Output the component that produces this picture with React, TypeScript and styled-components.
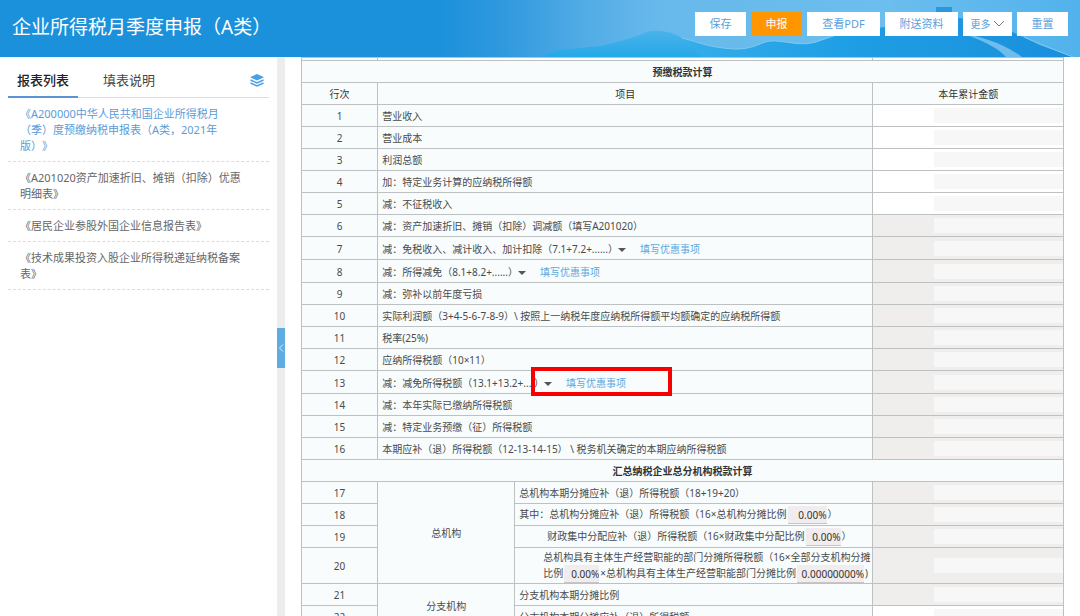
import React from "react";
import styled, { createGlobalStyle } from "styled-components";

const Global = createGlobalStyle`
  *, *::before, *::after { box-sizing: border-box; }
  body {
    margin: 0;
    background: #fff;
    color: #4a4a4a;
    font-family: "Noto Sans", "Noto Sans CJK SC", sans-serif;
    font-size: 10px;
    text-spacing-trim: space-all;
  }
  button, input { font-family: inherit; }
`;

const Page = styled.div`
  display: flex;
  flex-direction: column;
  height: 100vh;
  overflow: hidden;
`;

const Header = styled.header`
  position: relative;
  flex: none;
  display: flex;
  align-items: center;
  justify-content: space-between;
  height: 57px;
  padding: 0 12px;
  background: #1c91db;
`;

const Scenery = styled.svg`
  position: absolute;
  top: 0;
  right: 0;
  width: 640px;
  height: 57px;
`;

const Title = styled.h1`
  position: relative;
  margin: 0;
  padding-bottom: 4px;
  color: #fff;
  font-size: 19px;
  font-weight: 400;
  line-height: 28px;
  white-space: nowrap;
`;

const Toolbar = styled.div`
  position: relative;
  display: flex;
  gap: 5px;
  padding-bottom: 10px;
`;

const buttonWidths = { normal: 51, wide: 73, menu: 49 };

const ToolButton = styled.button<{ $primary?: boolean; $kind?: keyof typeof buttonWidths }>`
  display: flex;
  align-items: center;
  justify-content: center;
  gap: 2px;
  height: 24px;
  min-width: ${(p) => buttonWidths[p.$kind ?? "normal"]}px;
  padding: 0 6px;
  border: 0;
  background: ${(p) => (p.$primary ? "#ff9600" : "#fff")};
  color: ${(p) => (p.$primary ? "#fff" : "#5a9fdc")};
  font-size: ${(p) => (p.$kind === "menu" ? 10 : 11)}px;
  line-height: 24px;
  white-space: nowrap;
`;

const Body = styled.div`
  flex: 1;
  display: flex;
  min-height: 0;
`;

const Sidebar = styled.aside`
  flex: none;
  width: 277px;
  padding: 8px 8px 0;
`;

const TabBar = styled.div`
  display: flex;
  align-items: center;
  height: 33px;
  border-bottom: 1px solid #dcdcdc;
`;

const Tab = styled.button<{ $active?: boolean }>`
  height: 33px;
  margin-right: 16px;
  padding: 0 9px;
  border: 0;
  border-bottom: 2px solid ${(p) => (p.$active ? "#5b93d6" : "transparent")};
  background: none;
  color: ${(p) => (p.$active ? "#222" : "#444")};
  font-size: 13px;
  font-weight: ${(p) => (p.$active ? 500 : 400)};
  line-height: 30px;
`;

const LayersButton = styled.button`
  display: flex;
  margin-left: auto;
  padding: 0 5px 2px 0;
  border: 0;
  background: none;
`;

const FormList = styled.ul`
  margin: 0;
  padding: 0;
  list-style: none;
`;

const FormItem = styled.li`
  padding: 8px 24px 7px 12px;
  border-bottom: 1px dashed #dcdcdc;
`;

const FormLink = styled.a<{ $active?: boolean }>`
  display: block;
  color: ${(p) => (p.$active ? "#5b9bd8" : "#666")};
  font-size: 11px;
  line-height: 16px;
  text-decoration: none;
`;

const Divider = styled.div`
  flex: none;
  display: flex;
  align-items: center;
  width: 8px;
  padding-top: 22px;
  background: #ededed;
`;

const Collapse = styled.button`
  width: 8px;
  height: 40px;
  padding: 0;
  border: 0;
  background: #5dade0;
`;

const Main = styled.main`
  flex: 1;
  min-width: 0;
  padding: 0 16px;
  overflow: hidden;
`;

const Sheet = styled.table`
  width: 100%;
  table-layout: fixed;
  border-collapse: collapse;
`;

const Row = styled.tr<{ $height?: number }>`
  height: ${(p) => p.$height ?? 22}px;
`;

const Cell = styled.td<{ $center?: boolean }>`
  padding: 1px 4px 0;
  border: 1px solid #bec1c2;
  background: #f8fcfd;
  font-size: 10px;
  line-height: 16px;
  text-align: ${(p) => (p.$center ? "center" : "left")};
  white-space: nowrap;
`;

const HeadCell = styled(Cell).attrs({ as: "th" })<{ $strong?: boolean }>`
  color: #333;
  font-weight: ${(p) => (p.$strong ? 700 : 400)};
  text-align: center;
`;

const EdgeCell = styled(Cell)`
  padding: 0;
`;

const AmountCell = styled(Cell)<{ $locked?: boolean }>`
  padding: 0;
  background: ${(p) => (p.$locked ? "#f0eeed" : "#fff")};
`;

const AmountInput = styled.input`
  display: block;
  width: 68%;
  height: 15px;
  margin-left: auto;
  padding: 0 4px;
  border: 0;
  background: #f7f7f7;
  text-align: right;
`;

const RateInput = styled.input<{ $size: number }>`
  width: ${(p) => p.$size}px;
  height: 18px;
  margin: 0 1px;
  padding: 0;
  border: 0;
  border-bottom: 1px solid #c9c4c6;
  background: #f1eced;
  color: #333;
  font-size: 10px;
  text-align: right;
  vertical-align: middle;
`;

const Indent = styled.div`
  padding-left: 24px;
`;

const WideIndent = styled.div`
  padding-left: 28px;
`;

const Expand = styled.button`
  padding: 0;
  border: 0;
  background: none;
  line-height: 0;
  vertical-align: middle;
`;

const FillLink = styled.a`
  margin-left: 14px;
  color: #5aa9e0;
  text-decoration: none;
`;

const Marked = styled.span`
  position: relative;
`;

const RedFrame = styled.span`
  position: absolute;
  top: -9px;
  left: -3px;
  width: 141px;
  height: 29px;
  border: 4px solid #f80000;
`;

const Caret = () => (
  <svg width="8" height="4" viewBox="0 0 8 4" aria-hidden="true">
    <path d="M0 0h8L4 4z" fill="#555" />
  </svg>
);

const forms = [
  "《A200000中华人民共和国企业所得税月（季）度预缴纳税申报表（A类，2021年版）》",
  "《A201020资产加速折旧、摊销（扣除）优惠明细表》",
  "《居民企业参股外国企业信息报告表》",
  "《技术成果投资入股企业所得税递延纳税备案表》",
];

type Line = { text: string; fill?: boolean; marked?: boolean };

const lines: Line[] = [
  { text: "营业收入" },
  { text: "营业成本" },
  { text: "利润总额" },
  { text: "加：特定业务计算的应纳税所得额" },
  { text: "减：不征税收入" },
  { text: "减：资产加速折旧、摊销（扣除）调减额（填写A201020）" },
  { text: "减：免税收入、减计收入、加计扣除（7.1+7.2+......", fill: true },
  { text: "减：所得减免（8.1+8.2+......", fill: true },
  { text: "减：弥补以前年度亏损" },
  { text: "实际利润额（3+4-5-6-7-8-9）\\ 按照上一纳税年度应纳税所得额平均额确定的应纳税所得额" },
  { text: "税率(25%)" },
  { text: "应纳所得税额（10×11）" },
  { text: "减：减免所得税额（13.1+13.2+....", fill: true, marked: true },
  { text: "减：本年实际已缴纳所得税额" },
  { text: "减：特定业务预缴（征）所得税额" },
  { text: "本期应补（退）所得税额（12-13-14-15） \\ 税务机关确定的本期应纳所得税额" },
];

const Amount = ({ line, locked }: { line: number; locked?: boolean }) => (
  <AmountCell $locked={locked}>
    <AmountInput aria-label={`第${line}行本年累计金额`} readOnly={locked} />
  </AmountCell>
);

const FillTools = () => (
  <>
    ）
    <Expand type="button" aria-label="展开">
      <Caret />
    </Expand>
    <FillLink href="#fill">填写优惠事项</FillLink>
  </>
);

export default function App() {
  return (
    <Page>
      <Global />
      <Header>
        <Scenery viewBox="0 0 640 57" preserveAspectRatio="none" aria-hidden="true">
          <defs>
            <linearGradient id="sky" x1="0" x2="1" y1="0" y2="0">
              <stop offset="0" stopColor="#1c91db" />
              <stop offset="0.1" stopColor="#3099de" />
              <stop offset="0.22" stopColor="#50abe5" />
              <stop offset="0.34" stopColor="#68b9eb" />
              <stop offset="0.7" stopColor="#6bbeee" />
              <stop offset="1" stopColor="#52b2ec" />
            </linearGradient>
            <linearGradient id="hill" x1="0" x2="0" y1="0" y2="1">
              <stop offset="0" stopColor="#4ab3eb" />
              <stop offset="1" stopColor="#25a8e8" />
            </linearGradient>
            <linearGradient id="sea" x1="0" x2="1" y1="0" y2="0">
              <stop offset="0" stopColor="#35aeea" />
              <stop offset="0.4" stopColor="#1f9fe5" />
              <stop offset="1" stopColor="#1a8fdb" />
            </linearGradient>
          </defs>
          <path d="M0 0h640v57H0z" fill="url(#sky)" />
          <path d="M496 7h16v6h-16z" fill="#2b97dc" />
          <path d="M100 57L118 50L160 46C184 41 200 35 210 31C222 30 232 32 242 38C258 42 270 48 296 49L310 57z" fill="url(#hill)" />
          <path d="M242 38C258 42 270 48 296 49C318 49 320 40 336 41C350 42 362 46 376 42C390 37 402 33 420 30L520 18L560 26L585 38L600 45L633 57H262z" fill="url(#sea)" />
          <path d="M242 38C258 42 270 48 296 49C318 49 320 40 336 41C350 42 362 46 376 42C390 37 402 33 412 31" fill="none" stroke="#7fcaf1" />
          <path d="M522 33C540 37 562 42 582 57H566C556 46 540 40 522 33z" fill="#6fbcec" />
          <path d="M584 37L600 44L633 57" fill="none" stroke="#7cc8f2" />
        </Scenery>
        <Title>企业所得税月季度申报（A类）</Title>
        <Toolbar>
          <ToolButton type="button">保存</ToolButton>
          <ToolButton type="button" $primary>申报</ToolButton>
          <ToolButton type="button" $kind="wide">查看PDF</ToolButton>
          <ToolButton type="button" $kind="wide">附送资料</ToolButton>
          <ToolButton type="button" $kind="menu">
            更多
            <svg width="12" height="7" viewBox="0 0 12 7" aria-hidden="true">
              <path d="M1 1l5 5 5-5" fill="none" stroke="#777" />
            </svg>
          </ToolButton>
          <ToolButton type="button">重置</ToolButton>
        </Toolbar>
      </Header>
      <Body>
        <Sidebar>
          <TabBar>
            <Tab type="button" $active>报表列表</Tab>
            <Tab type="button">填表说明</Tab>
            <LayersButton type="button" aria-label="图层">
              <svg width="14" height="13" viewBox="0 0 14 13" aria-hidden="true">
                <path d="M7 0l7 3.2L7 6.400 0 3.200z" fill="#4a9fe6" />
                <path d="M0.500 6L7 9l6.500-3M0.500 9L7 12l6.500-3" fill="none" stroke="#4a9fe6" strokeWidth="1.400" />
              </svg>
            </LayersButton>
          </TabBar>
          <FormList>
            {forms.map((name, i) => (
              <FormItem key={name}>
                <FormLink href="#form" $active={i === 0}>{name}</FormLink>
              </FormItem>
            ))}
          </FormList>
        </Sidebar>
        <Divider>
          <Collapse type="button" aria-label="收起">
            <svg width="8" height="10" viewBox="0 0 8 10" aria-hidden="true">
              <path d="M6 1.500L2.500 5 6 8.500" fill="none" stroke="#d8ecf9" />
            </svg>
          </Collapse>
        </Divider>
        <Main>
          <Sheet>
            <colgroup>
              <col style={{ width: "10%" }} />
              <col style={{ width: "18%" }} />
              <col style={{ width: "47%" }} />
              <col style={{ width: "25%" }} />
            </colgroup>
            <tbody>
              <Row $height={3}>
                <EdgeCell />
                <EdgeCell colSpan={2} />
                <EdgeCell />
              </Row>
              <Row>
                <HeadCell colSpan={4} $strong>预缴税款计算</HeadCell>
              </Row>
              <Row>
                <HeadCell>行次</HeadCell>
                <HeadCell colSpan={2}>项目</HeadCell>
                <HeadCell>本年累计金额</HeadCell>
              </Row>
              {lines.map((line, i) => (
                <Row key={i} $height={line.fill ? 23 : 22}>
                  <Cell $center>{i + 1}</Cell>
                  <Cell colSpan={2}>
                    {line.text}
                    {line.fill && !line.marked && <FillTools />}
                    {line.marked && (
                      <Marked>
                        <FillTools />
                        <RedFrame />
                      </Marked>
                    )}
                  </Cell>
                  <Amount line={i + 1} locked={i > 4} />
                </Row>
              ))}
              <Row>
                <HeadCell colSpan={4} $strong>汇总纳税企业总分机构税款计算</HeadCell>
              </Row>
              <Row>
                <Cell $center>17</Cell>
                <Cell $center rowSpan={4}>总机构</Cell>
                <Cell>总机构本期分摊应补（退）所得税额（18+19+20）</Cell>
                <Amount line={17} locked />
              </Row>
              <Row>
                <Cell $center>18</Cell>
                <Cell>
                  其中：总机构分摊应补（退）所得税额（16×总机构分摊比例
                  <RateInput $size={39} defaultValue="0.00%" aria-label="总机构分摊比例" />
                  ）
                </Cell>
                <Amount line={18} locked />
              </Row>
              <Row>
                <Cell $center>19</Cell>
                <Cell>
                  <WideIndent>
                    财政集中分配应补（退）所得税额（16×财政集中分配比例
                    <RateInput $size={35} defaultValue="0.00%" aria-label="财政集中分配比例" />
                    ）
                  </WideIndent>
                </Cell>
                <Amount line={19} locked />
              </Row>
              <Row $height={35}>
                <Cell $center>20</Cell>
                <Cell>
                  <Indent>
                    总机构具有主体生产经营职能的部门分摊所得税额（16×全部分支机构分摊
                    <br />
                    比例
                    <RateInput $size={35} defaultValue="0.00%" aria-label="全部分支机构分摊比例" />
                    {"×总机构具有主体生产经营职能部门分摊比例"}
                    <RateInput $size={67} defaultValue="0.00000000%" aria-label="主体生产经营职能部门分摊比例" />
                    )
                  </Indent>
                </Cell>
                <Amount line={20} locked />
              </Row>
              <Row>
                <Cell $center>21</Cell>
                <Cell $center rowSpan={2}>分支机构</Cell>
                <Cell>分支机构本期分摊比例</Cell>
                <Amount line={21} locked />
              </Row>
              <Row>
                <Cell $center>22</Cell>
                <Cell>分支机构本期分摊应补（退）所得税额</Cell>
                <Amount line={22} />
              </Row>
            </tbody>
          </Sheet>
        </Main>
      </Body>
    </Page>
  );
}
